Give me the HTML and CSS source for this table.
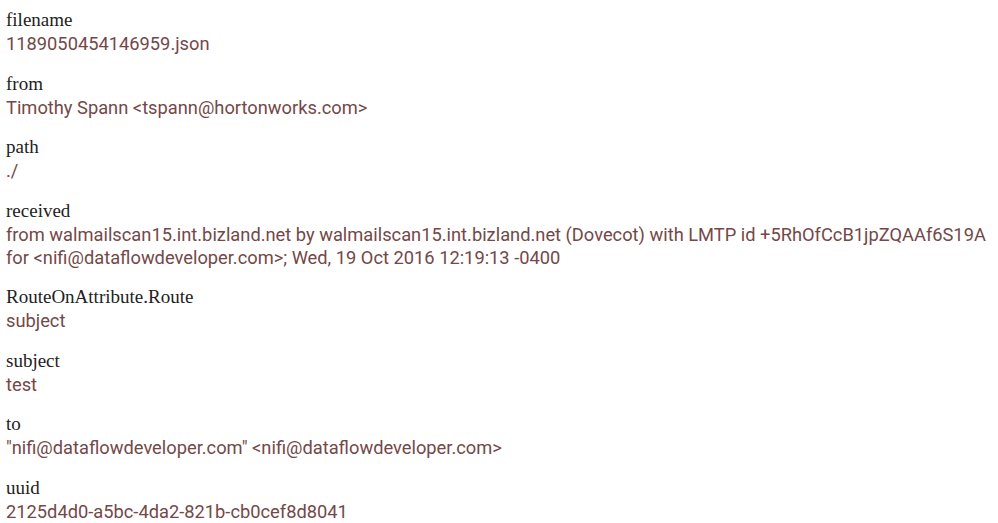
FILE: index.html
```html
<!DOCTYPE html>
<html>
<head>
<meta charset="utf-8">
<link rel="stylesheet" href="styles.css">
</head>
<body>
<div class="attrs">
  <div class="attr"><div class="label">filename</div><div class="value">1189050454146959.json</div></div>
  <div class="attr"><div class="label">from</div><div class="value">Timothy Spann &lt;tspann@hortonworks.com&gt;</div></div>
  <div class="attr"><div class="label">path</div><div class="value">./</div></div>
  <div class="attr"><div class="label">received</div><div class="value">from walmailscan15.int.bizland.net by walmailscan15.int.bizland.net (Dovecot) with LMTP id +5RhOfCcB1jpZQAAf6S19A<br>for &lt;nifi@dataflowdeveloper.com&gt;; Wed, 19 Oct 2016 12:19:13 -0400</div></div>
  <div class="attr"><div class="label">RouteOnAttribute.Route</div><div class="value">subject</div></div>
  <div class="attr"><div class="label">subject</div><div class="value">test</div></div>
  <div class="attr"><div class="label">to</div><div class="value">"nifi@dataflowdeveloper.com" &lt;nifi@dataflowdeveloper.com&gt;</div></div>
  <div class="attr"><div class="label">uuid</div><div class="value">2125d4d0-a5bc-4da2-821b-cb0cef8d8041</div></div>
</div>
</body>
</html>
```
FILE: styles.css
```css
html, body {
  margin: 0;
  padding: 0;
  background: #ffffff;
}
.attrs {
  padding: 8px 0 0 6px;
  display: flex;
  flex-direction: column;
  gap: 16.5px;
}
.label {
  font-family: "Liberation Serif", "Times New Roman", serif;
  font-size: 19px;
  line-height: 24px;
  color: #222222;
}
.value {
  font-family: Roboto, "Liberation Sans", sans-serif;
  font-size: 18.3px;
  font-weight: 400;
  line-height: 23px;
  color: #744848;
  white-space: nowrap;
}
```
